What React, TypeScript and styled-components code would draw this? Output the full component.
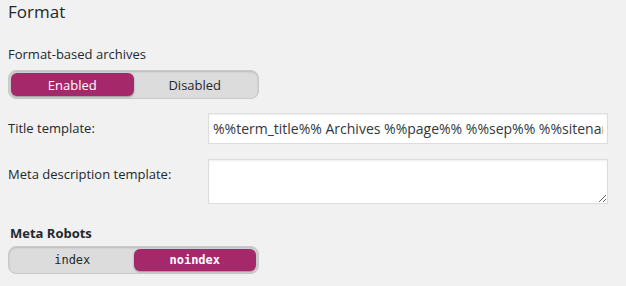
import React from "react";
import styled, { createGlobalStyle } from "styled-components";

const GlobalStyle = createGlobalStyle`
  body {
    margin: 0;
    background: #f1f1f1;
    font-family: "Open Sans", "Noto Sans", sans-serif;
    color: #23282d;
  }
`;

const Page = styled.div`
  padding: 0 8px;
  width: 626px;
  height: 286px;
  box-sizing: border-box;
  overflow: hidden;
`;

const Heading = styled.h2`
  font-size: 17px;
  font-weight: 500;
  line-height: 22px;
  margin: 0 0 22px;
  padding-top: 1px;
`;

const FieldLabel = styled.div<{ $bold?: boolean }>`
  font-size: 13px;
  line-height: 18px;
  font-weight: ${(p) => (p.$bold ? 700 : 400)};
  margin: 0 0 ${(p) => (p.$bold ? "4px" : "7px")} ${(p) => (p.$bold ? "2px" : "0")};
`;

const Switch = styled.div<{ $mono?: boolean }>`
  display: flex;
  width: 251px;
  height: ${(p) => (p.$mono ? "28px" : "29px")};
  box-sizing: border-box;
  padding: 2px;
  background: #dcdcdc;
  border: 1px solid #c9c9c9;
  border-radius: 8px;
  box-shadow: inset 0 1px 2px rgba(0, 0, 0, 0.15);
  font-family: ${(p) =>
    p.$mono ? '"DejaVu Sans Mono", "Liberation Mono", monospace' : "inherit"};
  font-size: ${(p) => (p.$mono ? "12px" : "13px")};
`;

const SwitchOption = styled.div<{ $active?: boolean; $strong?: boolean }>`
  flex: 1;
  display: flex;
  align-items: center;
  justify-content: center;
  border-radius: 6px;
  background: ${(p) => (p.$active ? "#a4286a" : "transparent")};
  color: ${(p) => (p.$active ? "#fff" : "#23282d")};
  font-weight: ${(p) => (p.$strong ? 700 : 400)};
  box-shadow: ${(p) => (p.$active ? "0 1px 2px rgba(0,0,0,0.35)" : "none")};
`;

const FormRow = styled.div<{ $gap: number }>`
  display: grid;
  grid-template-columns: 200px 400px;
  align-items: start;
  margin-top: ${(p) => p.$gap}px;
`;

const RowLabel = styled.label`
  font-size: 13px;
  line-height: 18px;
  padding-top: 6px;
`;

const TextInput = styled.input`
  height: 31px;
  box-sizing: border-box;
  width: 400px;
  border: 1px solid #ddd;
  background: #fff;
  box-shadow: inset 0 1px 2px rgba(0, 0, 0, 0.07);
  padding: 0 4px;
  font-family: "Open Sans", "Noto Sans", sans-serif;
  font-size: 14px;
  color: #32373c;
  outline: none;
`;

const TextArea = styled.textarea`
  height: 45px;
  width: 400px;
  box-sizing: border-box;
  border: 1px solid #ddd;
  background: #fff;
  box-shadow: inset 0 1px 2px rgba(0, 0, 0, 0.07);
  display: block;
  outline: none;
`;

const RobotsBlock = styled.div`
  margin-top: 20px;
`;

export default function App() {
  return (
    <Page>
      <GlobalStyle />
      <Heading>Format</Heading>
      <FieldLabel>Format-based archives</FieldLabel>
      <Switch>
        <SwitchOption $active>Enabled</SwitchOption>
        <SwitchOption>Disabled</SwitchOption>
      </Switch>
      <FormRow $gap={14}>
        <RowLabel>Title template:</RowLabel>
        <TextInput
          readOnly
          value="%%term_title%% Archives %%page%% %%sep%% %%sitename%%"
        />
      </FormRow>
      <FormRow $gap={15}>
        <RowLabel>Meta description template:</RowLabel>
        <TextArea readOnly />
      </FormRow>
      <RobotsBlock>
        <FieldLabel $bold>Meta Robots</FieldLabel>
        <Switch $mono>
          <SwitchOption>index</SwitchOption>
          <SwitchOption $active $strong>
            noindex
          </SwitchOption>
        </Switch>
      </RobotsBlock>
    </Page>
  );
}
